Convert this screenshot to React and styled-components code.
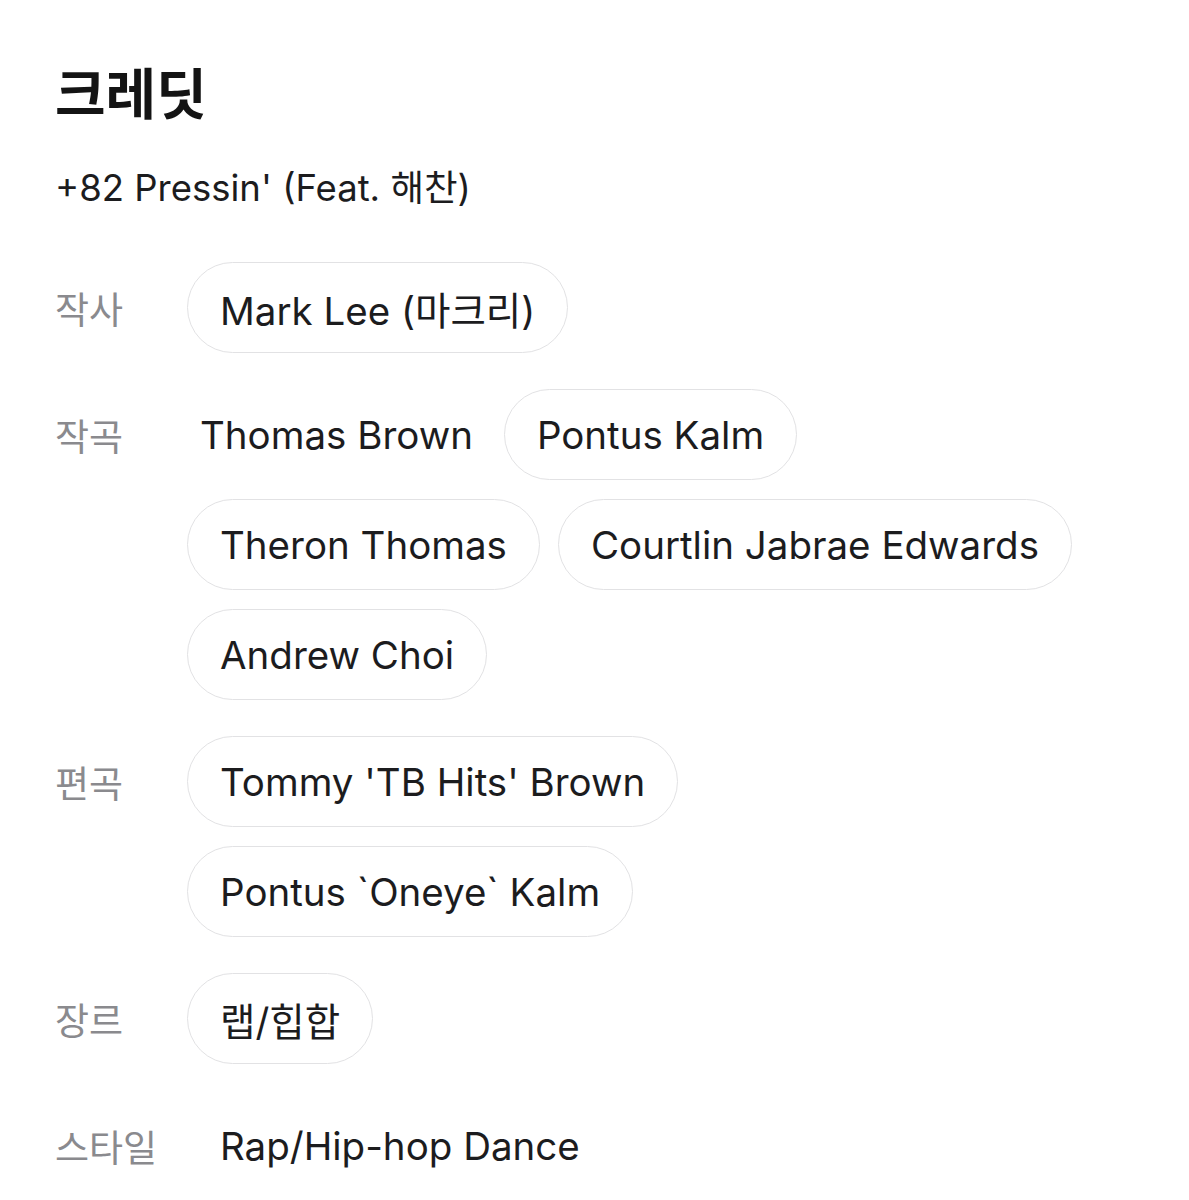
import React from "react";
import styled, { createGlobalStyle } from "styled-components";

const Global = createGlobalStyle`
  html, body { margin: 0; padding: 0; background: #ffffff; }
  body { font-family: Inter, "Noto Sans CJK KR", sans-serif; color: #1c1c1e; }
`;

const Page = styled.div`
  padding: 58px 80px 40px 55px;
`;

const Title = styled.h1`
  margin: 0;
  font-family: Inter, "Noto Sans CJK KR", sans-serif;
  font-size: 55px;
  font-weight: 700;
  line-height: 72px;
  color: #141414;
`;

const Subtitle = styled.div`
  margin-top: 36px;
  font-size: 36.5px;
  line-height: 44px;
  color: #1c1c1e;
`;

const List = styled.div`
  margin-top: 52px;
  display: flex;
  flex-direction: column;
  gap: 36px;
`;

const Row = styled.div`
  display: grid;
  grid-template-columns: 132px 1fr;
  align-items: start;
`;

const Label = styled.div`
  padding-top: 6px;
  font-size: 37px;
  line-height: 85px;
  color: #8a8a8e;
  white-space: nowrap;
`;

const Chips = styled.div`
  display: flex;
  flex-wrap: wrap;
  gap: 19px 18px;
`;

const Chip = styled.div`
  box-sizing: border-box;
  height: 91px;
  display: flex;
  align-items: center;
  padding: 0 ${(p) => (p.$plain ? "12px" : "32px")};
  border: 1.5px solid ${(p) => (p.$plain || p.$bare ? "transparent" : "#e2e2e4")};
  border-radius: 46px;
  font-size: 38.5px;
  color: #1c1c1e;
  white-space: nowrap;
`;

const rows = [
  { label: "작사", items: [{ t: "Mark Lee (마크리)" }] },
  {
    label: "작곡",
    items: [
      { t: "Thomas Brown", plain: true },
      { t: "Pontus Kalm" },
      { t: "Theron Thomas" },
      { t: "Courtlin Jabrae Edwards" },
      { t: "Andrew Choi" },
    ],
  },
  {
    label: "편곡",
    items: [{ t: "Tommy 'TB Hits' Brown" }, { t: "Pontus `Oneye` Kalm" }],
  },
  { label: "장르", items: [{ t: "랩/힙합" }] },
  { label: "스타일", items: [{ t: "Rap/Hip-hop Dance", bare: true }] },
];

export default function App() {
  return (
    <Page>
      <Global />
      <Title>크레딧</Title>
      <Subtitle>+82 Pressin' (Feat. 해찬)</Subtitle>
      <List>
        {rows.map((r) => (
          <Row key={r.label}>
            <Label>{r.label}</Label>
            <Chips>
              {r.items.map((it) => (
                <Chip key={it.t} $plain={it.plain} $bare={it.bare}>
                  {it.t}
                </Chip>
              ))}
            </Chips>
          </Row>
        ))}
      </List>
    </Page>
  );
}
